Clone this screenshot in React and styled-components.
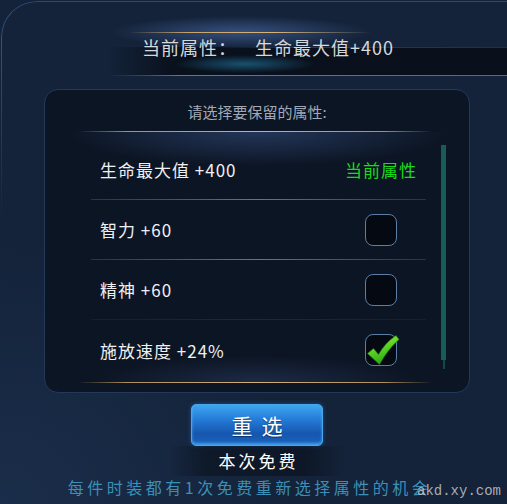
import React from "react";
import styled, { createGlobalStyle } from "styled-components";

const GlobalStyle = createGlobalStyle`
  html, body { margin: 0; padding: 0; background: #14233a; }
  body {
    width: 507px;
    height: 504px;
    overflow: hidden;
    font-family: "Noto Sans CJK SC", "Noto Sans", sans-serif;
  }
`;

const Frame = styled.div`
  position: relative;
  height: 504px;
  overflow: hidden;
  box-sizing: border-box;
  padding-top: 15px;
  background: radial-gradient(ellipse 300px 260px at 0% 100%, #1a2d4a 0%, rgba(26, 45, 74, 0) 100%), #14233a;
  &::before {
    content: "";
    position: absolute;
    left: 1px;
    top: 1px;
    right: 0;
    height: 220px;
    border-top: 1px solid #2c4a70;
    border-left: 1px solid #34577f;
    border-top-left-radius: 36px;
    -webkit-mask-image: linear-gradient(to bottom, #000 15%, transparent 100%);
    mask-image: linear-gradient(to bottom, #000 15%, transparent 100%);
    pointer-events: none;
  }
`;

const TitleBlock = styled.div`
  position: relative;
  height: 62px;
  background: radial-gradient(130px 16px at 240px 17px, rgba(95, 135, 210, 0.45), rgba(95, 135, 210, 0));
  &::before {
    content: "";
    position: absolute;
    left: 128px;
    width: 244px;
    top: 17px;
    height: 1px;
    background: linear-gradient(90deg, rgba(201, 164, 106, 0), #c9a46a 25%, #d6b47a 60%, rgba(201, 164, 106, 0));
  }
  &::after {
    content: "";
    position: absolute;
    left: 108px;
    right: 0;
    top: 32px;
    bottom: 1px;
    background:
      linear-gradient(90deg, rgba(138, 112, 70, 0) 0, #8a7046 18%, #7a6440 100%) bottom / 100% 1px no-repeat,
      linear-gradient(90deg, rgba(120, 100, 65, 0) 25%, rgba(120, 100, 65, 0.45) 50%, rgba(120, 100, 65, 0.35) 100%) top / 100% 1px no-repeat,
      radial-gradient(70px 9px at 137px 17px, rgba(45, 160, 210, 0.45), rgba(45, 160, 210, 0)),
      linear-gradient(90deg, rgba(6, 11, 20, 0) 0, rgba(6, 11, 20, 0.75) 16%, rgba(6, 11, 20, 0.8) 100%);
  }
`;

const TitleText = styled.div`
  position: relative;
  z-index: 1;
  display: flex;
  padding: 20px 0 0 142px;
  font-size: 18px;
  line-height: 24px;
  letter-spacing: 1px;
  color: #d6d8dc;
`;

const TitleValue = styled.span`
  margin-left: 18px;
`;

const Panel = styled.div`
  margin: 12px 0 0 44px;
  width: 426px;
  height: 304px;
  box-sizing: border-box;
  border: 1.5px solid #24395a;
  border-radius: 14px;
  background: #0c1524;
  display: flex;
  flex-direction: column;
  padding-bottom: 9px;
`;

const PanelHeader = styled.div`
  height: 41px;
  box-sizing: border-box;
  padding-top: 11px;
  text-align: center;
  font-size: 15px;
  line-height: 21px;
  color: #a3a9b4;
`;

const GoldLine = styled.div`
  height: 1px;
  margin: 0 36px 0 33px;
  background: linear-gradient(90deg, rgba(176, 143, 92, 0), #b08f5c 14%, #d3b077 50%, #b08f5c 86%, rgba(176, 143, 92, 0));
`;

const Body = styled.div`
  display: flex;
  flex: 1;
  padding-top: 8px;
  background:
    radial-gradient(190px 34px at 50% 0, rgba(50, 76, 124, 0.6), rgba(50, 76, 124, 0)),
    radial-gradient(160px 26px at 50% 100%, rgba(48, 68, 108, 0.45), rgba(48, 68, 108, 0));
`;

const List = styled.div`
  margin-left: 46px;
  width: 335px;
  display: flex;
  flex-direction: column;
`;

const Row = styled.div`
  height: 60px;
  box-sizing: border-box;
  display: flex;
  align-items: center;
  justify-content: space-between;
  padding: 0 9px;
  border-bottom: 1px solid transparent;
  border-image: ${({ $line }) =>
    $line === "gold"
      ? "linear-gradient(90deg, rgba(110, 92, 60, 0.4), #85704a 50%, rgba(110, 92, 60, 0.4)) 1"
      : $line === "dim"
      ? "linear-gradient(90deg, #161f2d, #1d2839 50%, #161f2d) 1"
      : "none"};
  ${({ $line }) => ($line ? "" : "border-bottom: none;")}
`;

const Label = styled.span`
  font-size: 17px;
  letter-spacing: 1px;
  color: #eef0f2;
`;

const Current = styled.span`
  font-size: 17px;
  letter-spacing: 1px;
  color: #18dc18;
`;

const Box = styled.div`
  position: relative;
  width: 32px;
  height: 32px;
  box-sizing: border-box;
  margin-right: 20px;
  border: 1.5px solid #5a7ea6;
  border-radius: 8px;
  background: #050a12;
  svg {
    position: absolute;
    left: 0;
    top: 0;
    overflow: visible;
  }
`;

const Scrollbar = styled.div`
  position: relative;
  margin: 5px 0 0 15px;
  width: 5px;
  height: 215px;
  background: #165c58;
  &::after {
    content: "";
    position: absolute;
    left: 1.5px;
    top: 100%;
    width: 2px;
    height: 9px;
    background: #124a47;
  }
`;

const Footer = styled.div`
  width: 426px;
  margin-left: 44px;
  display: flex;
  flex-direction: column;
  align-items: center;
`;

const Button = styled.button`
  margin-top: 11px;
  width: 132px;
  height: 42px;
  box-sizing: border-box;
  border: 1px solid #4aa6ec;
  border-radius: 5px;
  background: linear-gradient(180deg, #3ea6f0 0%, #2379d6 38%, #1656ae 72%, #1a63bd 100%);
  box-shadow: inset 0 -2px 3px rgba(90, 190, 255, 0.65), 0 0 4px rgba(40, 120, 220, 0.5);
  color: #ffffff;
  font-family: "Noto Sans CJK SC", "Noto Sans", sans-serif;
  font-size: 21px;
  line-height: 40px;
  letter-spacing: 9px;
  text-indent: 9px;
  padding: 0;
  text-shadow: 0 1px 1px rgba(0, 0, 0, 0.45);
`;

const FreeText = styled.div`
  width: 176px;
  height: 30px;
  text-align: center;
  font-size: 17px;
  line-height: 30px;
  letter-spacing: 3px;
  text-indent: 3px;
  color: #ffffff;
  background: linear-gradient(90deg, rgba(8, 14, 24, 0), rgba(8, 14, 24, 0.55) 22%, rgba(8, 14, 24, 0.55) 78%, rgba(8, 14, 24, 0));
`;

const Note = styled.div`
  padding-right: 8px;
  text-align: center;
  font-size: 16px;
  line-height: 22px;
  letter-spacing: 3.5px;
  color: #3c8fb6;
`;

const Watermark = styled.div`
  position: absolute;
  left: 417px;
  top: 482px;
  font-family: "Liberation Mono", monospace;
  font-size: 14px;
  line-height: 18px;
  color: rgba(200, 200, 200, 0.85);
`;

const Check = () => (
  <svg width="32" height="32" viewBox="0 0 32 32">
    <defs>
      <linearGradient id="chk" x1="0" y1="0" x2="0.4" y2="1">
        <stop offset="0" stopColor="#a8f53c" />
        <stop offset="0.5" stopColor="#5ed424" />
        <stop offset="1" stopColor="#2aa818" />
      </linearGradient>
    </defs>
    <path
      d="M1.5 18.5 L7.5 13.5 L12.5 19.5 Q19 8 30 0.5 L33 4.5 Q22 14 13.5 29.5 Z"
      fill="url(#chk)"
      stroke="#1e7a12"
      strokeWidth="0.6"
    />
  </svg>
);

const rows = [
  { label: "生命最大值 +400", current: true, line: "gold" },
  { label: "智力 +60", line: "gold" },
  { label: "精神 +60", line: "dim" },
  { label: "施放速度 +24%", checked: true, line: null },
];

export default function App() {
  return (
    <>
      <GlobalStyle />
      <Frame>
        <TitleBlock>
          <TitleText>
            <span>当前属性：</span>
            <TitleValue>生命最大值+400</TitleValue>
          </TitleText>
        </TitleBlock>
        <Panel>
          <PanelHeader>请选择要保留的属性:</PanelHeader>
          <GoldLine />
          <Body>
            <List>
              {rows.map((r) => (
                <Row key={r.label} $line={r.line}>
                  <Label>{r.label}</Label>
                  {r.current ? (
                    <Current>当前属性</Current>
                  ) : (
                    <Box>{r.checked && <Check />}</Box>
                  )}
                </Row>
              ))}
            </List>
            <Scrollbar />
          </Body>
          <GoldLine />
        </Panel>
        <Footer>
          <Button>重选</Button>
          <FreeText>本次免费</FreeText>
        </Footer>
        <Note>每件时装都有1次免费重新选择属性的机会</Note>
        <Watermark>akd.xy.com</Watermark>
      </Frame>
    </>
  );
}
